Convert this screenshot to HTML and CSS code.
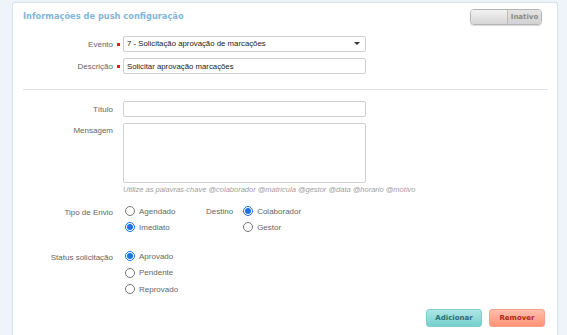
FILE: index.html
```html
<!DOCTYPE html>
<html lang="pt">
<head>
  <meta charset="UTF-8">
  <title>Push configuração</title>
  <link rel="stylesheet" href="styles.css">
</head>
<body>
  <div class="panel">
    <div class="panel-head">
      <h2>Informações de push configuração</h2>
      <div class="toggle"><span class="knob"></span><span class="state">Inativo</span></div>
    </div>

    <div class="row">
      <label class="lbl">Evento</label><span class="req"></span>
      <div class="select">7 - Solicitação aprovação de marcações</div>
    </div>
    <div class="row">
      <label class="lbl">Descrição</label><span class="req"></span>
      <input class="field" type="text" value="Solicitar aprovação marcações">
    </div>

    <hr class="divider">

    <div class="row">
      <label class="lbl">Título</label><span></span>
      <input class="field" type="text">
    </div>
    <div class="row row-top">
      <label class="lbl">Mensagem</label><span></span>
      <div>
        <textarea class="field area"></textarea>
        <div class="hint">Utilize as palavras-chave @colaborador @matricula @gestor @data @horario @motivo</div>
      </div>
    </div>

    <div class="row row-top opts">
      <label class="lbl">Tipo de Envio</label><span></span>
      <div class="choice-line">
        <div class="choices tipo">
          <label class="opt"><input type="radio" name="tipo"> Agendado</label>
          <label class="opt"><input type="radio" name="tipo" checked> Imediato</label>
        </div>
        <span class="lbl inline">Destino</span>
        <div class="choices">
          <label class="opt"><input type="radio" name="destino" checked> Colaborador</label>
          <label class="opt"><input type="radio" name="destino"> Gestor</label>
        </div>
      </div>
    </div>

    <div class="row row-top opts status">
      <label class="lbl">Status solicitação</label><span></span>
      <div class="choices">
        <label class="opt"><input type="radio" name="status" checked> Aprovado</label>
        <label class="opt"><input type="radio" name="status"> Pendente</label>
        <label class="opt"><input type="radio" name="status"> Reprovado</label>
      </div>
    </div>

    <div class="actions">
      <button class="btn btn-add">Adicionar</button>
      <button class="btn btn-remove">Remover</button>
    </div>
  </div>
</body>
</html>
```

FILE: styles.css
```css
body {
  margin: 0;
  padding: 2px 9px 0 12px;
  background: #eef4f9;
  font-family: "Liberation Sans", Arial, sans-serif;
  font-size: 8px;
  color: #666;
  height: 335px;
  box-sizing: border-box;
  overflow: hidden;
}
.panel {
  box-sizing: border-box;
  height: 100%;
  background: #fff;
  border: 1px solid #d6e4f0;
  border-bottom: 0;
  border-radius: 3px 3px 0 0;
  padding: 6px 9px 0 10px;
}
.panel-head {
  display: flex;
  justify-content: space-between;
  align-items: flex-start;
  padding-right: 6px;
}
.panel-head h2 {
  margin: 1px 0 0;
  font-family: "DejaVu Sans", Verdana, sans-serif;
  font-stretch: condensed;
  font-size: 9.2px;
  font-weight: bold;
  color: #83b6d9;
}
.toggle {
  display: flex;
  width: 70px;
  height: 14px;
  border: 1px solid #b4b4b4;
  border-radius: 4px;
  overflow: hidden;
  box-shadow: 0 1px 1px rgba(0, 0, 0, 0.15);
}
.knob {
  width: 36px;
  background: linear-gradient(#f2f2f2, #d6d6d6);
  border-right: 1px solid #bdbdbd;
}
.state {
  flex: 1;
  text-align: center;
  line-height: 14px;
  background: linear-gradient(#e4e4e4, #d2d2d2);
  font-family: "DejaVu Sans", Verdana, sans-serif;
  font-size: 7px;
  font-weight: bold;
  color: #8a8a8a;
}
.row {
  display: grid;
  grid-template-columns: 90px 10px 243px;
  align-items: center;
  margin-top: 6px;
}
.panel-head + .row {
  margin-top: 11px;
}
.row-top {
  align-items: start;
}
.lbl {
  text-align: right;
  color: #666;
}
.row-top > .lbl {
  padding-top: 3px;
}
.req {
  width: 3px;
  height: 3px;
  background: #e41b1b;
  justify-self: center;
  margin-left: 1px;
}
.field, .select {
  box-sizing: border-box;
  height: 16px;
  margin: 0;
  padding: 0 3px;
  border: 1px solid #cfcfcf;
  border-radius: 2px;
  font: 7.8px "Liberation Sans", Arial, sans-serif;
  color: #222;
  background: #fff;
  outline: none;
}
.select {
  position: relative;
  line-height: 14px;
}
.select::after {
  content: "";
  position: absolute;
  right: 5px;
  top: 5px;
  border: 3px solid transparent;
  border-top: 3px solid #333;
  border-left-width: 3.5px;
  border-right-width: 3.5px;
}
.field {
  width: 243px;
}
.divider {
  border: 0;
  border-top: 1px solid #e2e2e2;
  margin: 15px 0 11px 0;
}
.divider + .row {
  margin-top: 0;
}
.area {
  display: block;
  height: 60px;
  resize: none;
}
.hint {
  margin-top: 2px;
  white-space: nowrap;
  font-style: italic;
  font-size: 7.5px;
  color: #a0a0a0;
}
.opts {
  margin-top: 11px;
}
.status {
  margin-top: 17px;
}
.choice-line {
  display: flex;
  align-items: flex-start;
}
.choices {
  display: flex;
  flex-direction: column;
  gap: 4px;
}
.choices.tipo {
  width: 83px;
}
.lbl.inline {
  padding-top: 2px;
  margin-right: 8px;
}
.opt {
  display: flex;
  align-items: center;
  gap: 4px;
  height: 12px;
  padding-left: 2px;
  color: #666;
}
.status .choices {
  gap: 4.5px;
}
.opt input {
  width: 10px;
  height: 10px;
  margin: 0;
  accent-color: #1a73e8;
}
.actions {
  display: flex;
  justify-content: flex-end;
  gap: 7px;
  margin-top: 14px;
  padding-right: 3px;
}
.btn {
  width: 56px;
  height: 18px;
  padding: 0;
  border-radius: 3px;
  font-family: "DejaVu Sans", Verdana, sans-serif;
  font-size: 7px;
  font-weight: bold;
  cursor: pointer;
}
.btn-add {
  color: #2b6e70;
  border: 1px solid #7fcfcf;
  background: linear-gradient(#aee7e6, #74cfcd);
}
.btn-remove {
  color: #b3261e;
  border: 1px solid #f7a18a;
  background: linear-gradient(#ffc0ad, #ff9274);
}
```
